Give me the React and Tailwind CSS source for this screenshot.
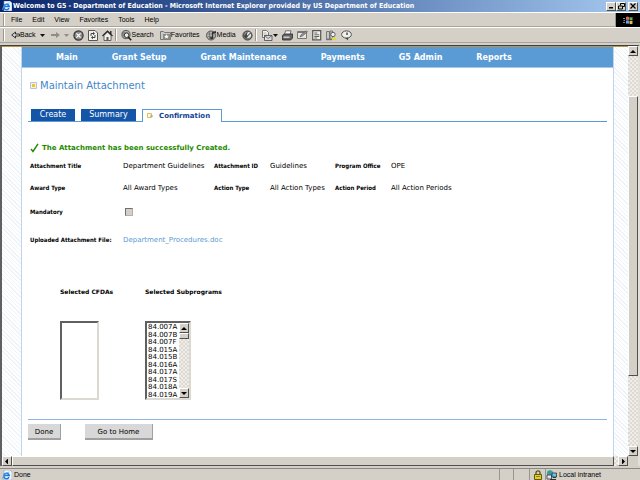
import React from "react";

const NAV_ITEMS = [
  "Main",
  "Grant Setup",
  "Grant Maintenance",
  "Payments",
  "G5 Admin",
  "Reports",
];

const MENU_ITEMS = ["File", "Edit", "View", "Favorites", "Tools", "Help"];

const SUBPROGRAMS = [
  "84.007A",
  "84.007B",
  "84.007F",
  "84.015A",
  "84.015B",
  "84.016A",
  "84.017A",
  "84.017S",
  "84.018A",
  "84.019A",
];

const RAISED =
  "bg-[#d4d0c8] border border-t-white border-l-white border-b-[#505050] border-r-[#505050]";

const HATCH =
  "bg-[repeating-linear-gradient(45deg,#ffffff_0px,#ffffff_2px,#eef3f7_2px,#eef3f7_3px)]";

const TRACK =
  "bg-[repeating-conic-gradient(#dedad2_0_25%,#efede9_0_50%)] bg-[length:4px_4px]";

const IeIcon = () => (
  <svg width="10" height="10" viewBox="0 0 10 10" className="shrink-0">
    <path d="M2 0h6l2 2v8H2z" fill="#f4f8ff" stroke="#8b9bb5" strokeWidth="0.6" />
    <path
      d="M7 7.2A2.7 2.7 0 1 1 7.2 5.4H2.4"
      fill="none"
      stroke="#1c78d8"
      strokeWidth="1.5"
    />
    <path d="M0.6 9C0 7 3.5 2.6 7.6 2" fill="none" stroke="#4fa8ee" strokeWidth="0.8" />
  </svg>
);

const ArrowIcon = ({ forward }) => (
  <svg width="9" height="8" viewBox="0 0 9 8" className="shrink-0">
    {forward ? (
      <path d="M0 3h5V1l4 3-4 3V5H0z" fill="#8f8d88" />
    ) : (
      <path d="M8.5 3H4.5V1L0.7 4l3.8 3V5h4z" fill="#d4d0c8" stroke="#222" strokeWidth="0.9" />
    )}
  </svg>
);

const Caret = ({ faded }) => (
  <svg width="5" height="3" viewBox="0 0 5 3" className="shrink-0">
    <path d="M0 0h5L2.5 3z" fill={faded ? "#8f8d88" : "#111"} />
  </svg>
);

const StopIcon = () => (
  <svg width="11" height="11" viewBox="0 0 11 11">
    <circle cx="5.5" cy="5.5" r="4.6" fill="#8c8c8c" stroke="#333" strokeWidth="1.2" />
    <path d="M3.4 3.4l4.2 4.2M7.6 3.4L3.4 7.6" stroke="#fff" strokeWidth="1.3" />
  </svg>
);

const RefreshIcon = () => (
  <svg width="10" height="11" viewBox="0 0 10 11">
    <path d="M0.5 0.5H7L9.5 3v7.5h-9z" fill="#f2f2ee" stroke="#555" />
    <path d="M3 6V3.5h3M7 5v2.5H4" fill="none" stroke="#444" />
    <path d="M5 1.8l2 1.7-2 1.7zM5 5.8L3 7.5l2 1.7z" fill="#444" />
  </svg>
);

const HomeIcon = () => (
  <svg width="11" height="11" viewBox="0 0 11 11">
    <path d="M8 1h1.5v3H8z" fill="#333" />
    <path d="M2 5.5L5.5 2 9 5.5v5H2z" fill="#f0efeb" stroke="#444" strokeWidth="0.8" />
    <path d="M0.5 6l5-5 5 5" fill="none" stroke="#222" strokeWidth="1.1" />
    <path d="M4.5 7h2v3.5h-2z" fill="#555" />
  </svg>
);

const SearchIcon = () => (
  <svg width="11" height="11" viewBox="0 0 11 11">
    <circle cx="5" cy="4.6" r="4.1" fill="#b5b5b2" stroke="#555" />
    <path d="M1.5 3h6M1 5h4M3 1.5v6" stroke="#666" strokeWidth="0.7" />
    <circle cx="5.6" cy="5.2" r="2.3" fill="#eee" stroke="#333" />
    <path d="M7.2 7l3 3.2" stroke="#222" strokeWidth="1.6" />
  </svg>
);

const FolderIcon = () => (
  <svg width="11" height="10" viewBox="0 0 11 10">
    <path d="M0.5 1.5h3l1 1h6v7h-10z" fill="#c9c9c5" stroke="#777" />
    <path d="M3 4h7.5v5.5H3z" fill="#8a8a88" />
    <path
      d="M6.5 4.3l.7 1.5 1.6.2-1.2 1 .4 1.6-1.5-.9-1.4.9.3-1.6-1.2-1 1.6-.2z"
      fill="#fff"
    />
  </svg>
);

const MediaIcon = () => (
  <svg width="11" height="11" viewBox="0 0 11 11">
    <circle cx="5" cy="5.5" r="4.5" fill="#b3b3b0" stroke="#555" />
    <path d="M1.5 4h5M1.5 6.5h4M3.5 1.5v8" stroke="#6a6a6a" strokeWidth="0.7" />
    <path d="M6 8V2l4-1v2L7.2 3.8V8z" fill="#333" />
    <ellipse cx="5.7" cy="8" rx="1.7" ry="1.3" fill="#333" />
  </svg>
);

const HistoryIcon = () => (
  <svg width="11" height="11" viewBox="0 0 11 11">
    <circle cx="5.5" cy="5.5" r="4.6" fill="#777" stroke="#444" />
    <circle cx="6" cy="5" r="3" fill="#ececea" />
    <path d="M4 8.5l-3-3h2c0-2 1-3 3-4-1 2-1 3-1 4h2z" fill="#444" />
    <path d="M6 5.5L8.5 3" stroke="#222" />
  </svg>
);

const MailIcon = () => (
  <svg width="12" height="11" viewBox="0 0 12 11">
    <path d="M1.5 0.5h4l2 2v5h-6z" fill="#f4f4f2" stroke="#666" strokeWidth="0.9" />
    <path d="M2.5 3h3M2.5 5h4" stroke="#999" strokeWidth="0.7" />
    <path d="M3.5 5.5H11v5H3.5z" fill="#ddd" stroke="#555" strokeWidth="0.9" />
    <path d="M3.5 5.5l3.7 3 3.8-3" fill="none" stroke="#555" strokeWidth="0.8" />
  </svg>
);

const PrintIcon = () => (
  <svg width="11" height="11" viewBox="0 0 11 11">
    <path d="M3.5 0.8H9L8 5H2.5z" fill="#f6f6f4" stroke="#555" strokeWidth="0.8" />
    <path d="M0.6 5.2l2-1.2h8v4l-2 2h-8z" fill="#666" stroke="#222" strokeWidth="0.8" />
    <path d="M1.5 6.5h6V8h-6z" fill="#ccc" />
  </svg>
);

const EditIcon = () => (
  <svg width="11" height="10" viewBox="0 0 11 10">
    <path d="M0.5 1.5h9v7h-9z" fill="#e6e6e2" stroke="#777" />
    <path d="M1 2.5h8" stroke="#777" />
    <path d="M3 7l1-2.2L9.5 0.8l1 1L5.5 6z" fill="#999" stroke="#555" strokeWidth="0.6" />
  </svg>
);

const NotesIcon = () => (
  <svg width="10" height="11" viewBox="0 0 10 11">
    <path d="M0.7 0.7h8v9.2h-8z" fill="#f1f1ee" stroke="#555" strokeWidth="1.2" />
    <path d="M2.3 3h3M2.3 4.8h5M2.3 6.5h5M2.3 8h3" stroke="#555" strokeWidth="0.9" />
  </svg>
);

const ResearchIcon = () => (
  <svg width="11" height="11" viewBox="0 0 11 11">
    <path d="M0.5 1.5h3V9h-3zM4 1h2.5v8H4z" fill="#c8c8c5" stroke="#666" strokeWidth="0.8" />
    <circle cx="7" cy="4.5" r="2.2" fill="#eee" stroke="#555" strokeWidth="0.9" />
    <path d="M6 10V7.5h3l1.5 2.5z" fill="#e3d832" />
    <path d="M0 9.7h6" stroke="#666" />
  </svg>
);

const MessengerIcon = () => (
  <svg width="11" height="11" viewBox="0 0 11 11">
    <ellipse cx="5.5" cy="4.5" rx="4.9" ry="3.6" fill="#f0f0ed" stroke="#444" strokeWidth="0.9" />
    <path d="M4.5 7.8h3l-1 2.7z" fill="#444" />
    <path d="M5 2.5h2V5H5z" fill="#777" />
  </svg>
);

const WindowsFlag = () => (
  <svg width="10" height="9" viewBox="0 0 10 9">
    <path d="M3 1q1.5-.8 3 0v3.1q-1.5-.8-3 0z" fill="#d8694f" />
    <path d="M6.5 1q1.5.8 3 0v3.1q-1.5.8-3 0z" fill="#6fae5b" />
    <path d="M3 4.7q1.5-.8 3 0v3.1q-1.5-.8-3 0z" fill="#6b9be0" />
    <path d="M6.5 4.7q1.5.8 3 0v3.1q-1.5.8-3 0z" fill="#e0c04c" />
    <path d="M0 2.5h2M0.5 4.5H2M0 6.5h2" stroke="#6d86b8" />
  </svg>
);

const LockIcon = () => (
  <svg width="8" height="10" viewBox="0 0 8 10">
    <path d="M2 5V2.8a2 2 0 0 1 4 0V5" fill="none" stroke="#55521c" strokeWidth="1.3" />
    <path d="M0.5 4.5h7v5h-7z" fill="#e2cf22" stroke="#5f5a10" />
    <path d="M2 6.5h4" stroke="#8f8512" />
  </svg>
);

const IntranetIcon = () => (
  <svg width="11" height="10" viewBox="0 0 11 10">
    <circle cx="4" cy="3.5" r="3.2" fill="#3d9be0" />
    <path d="M2 2l2-1.5 2 1-1 2-2 .5z" fill="#3aa655" />
    <path d="M1 5h4.500v4H1z" fill="#dfe8ee" stroke="#333" strokeWidth="0.8" />
    <path d="M6 3h4.500v4H6z" fill="#63c4ea" stroke="#333" strokeWidth="0.8" />
    <path d="M4 9.500h6M7 7.500h3" stroke="#333" />
  </svg>
);

const Separator = () => (
  <div className="h-3 w-0.5 shrink-0 border-l border-r border-l-[#9a968e] border-r-white" />
);

const ScrollButton = ({ direction, label }) => {
  const paths = {
    up: "M0 4h6L3 1z",
    down: "M0 1h6L3 4z",
    left: "M4 -0.5v6L1 2.5z",
    right: "M2 -0.5v6l3-3z",
  };
  return (
    <button
      type="button"
      aria-label={label}
      className={`flex size-2.5 shrink-0 items-center justify-center ${RAISED}`}
    >
      <svg width="6" height="5" viewBox="0 0 6 5">
        <path d={paths[direction]} fill="#000" />
      </svg>
    </button>
  );
};

const TitleBar = () => (
  <header className="flex h-3 items-center bg-linear-to-r from-[#0a246a] to-[#a6caf0] px-0.5">
    <IeIcon />
    <h1 className="grow truncate pl-px font-['DejaVu_Sans_Condensed','DejaVu_Sans',sans-serif] text-[7px] leading-3 font-bold text-white">
      Welcome to G5 - Department of Education - Microsoft Internet Explorer provided by US Department of Education
    </h1>
    <div className="flex shrink-0">
      <button type="button" aria-label="Minimize" className={`flex h-[9px] w-2.5 items-end justify-center ${RAISED}`}>
        <svg width="6" height="3" viewBox="0 0 6 3">
          <path d="M1 0h4v1.5H1z" />
        </svg>
      </button>
      <button type="button" aria-label="Restore" className={`flex h-[9px] w-2.5 items-center justify-center ${RAISED}`}>
        <svg width="7" height="7" viewBox="0 0 7 7">
          <path d="M2.5 2.5v-2h4v3h-2M0.5 3h4v3h-4z" fill="none" stroke="#000" />
        </svg>
      </button>
      <button type="button" aria-label="Close" className={`ml-0.5 flex h-[9px] w-2.5 items-center justify-center ${RAISED}`}>
        <svg width="6" height="6" viewBox="0 0 6 6">
          <path d="M0.5 0.5l5 5M5.5 0.5l-5 5" stroke="#000" strokeWidth="1.2" />
        </svg>
      </button>
    </div>
  </header>
);

const MenuBar = () => (
  <div className="flex h-[15px] items-stretch border-t border-white">
    <nav className="flex grow items-center gap-2.5 border-r border-b border-r-[#9a968e] border-b-[#a8a49c] pl-[3px]">
      <Separator />
      {MENU_ITEMS.map((item) => (
        <button key={item} type="button" className="first-of-type:-ml-1">
          {item}
        </button>
      ))}
    </nav>
    <div className="flex w-6 items-center justify-center bg-black">
      <WindowsFlag />
    </div>
  </div>
);

const ToolButton = ({ icon, label, name, className = "" }) => (
  <button type="button" aria-label={name} className={`flex items-center ${className}`}>
    {icon}
    {label}
  </button>
);

const Toolbar = () => (
  <div className="flex h-4 items-center border-t border-b border-t-white border-b-[#a8a49c] pl-[3px]">
    <Separator />
    <ToolButton className="ml-1.5" icon={<ArrowIcon />} label="Back" />
    <ToolButton className="ml-1" name="Back history" icon={<Caret />} />
    <ToolButton className="ml-1.5" name="Forward" icon={<ArrowIcon forward />} />
    <ToolButton className="ml-1" name="Forward history" icon={<Caret faded />} />
    <ToolButton className="ml-1" name="Stop" icon={<StopIcon />} />
    <ToolButton className="ml-1" name="Refresh" icon={<RefreshIcon />} />
    <ToolButton className="mr-0.5 ml-1" name="Home" icon={<HomeIcon />} />
    <Separator />
    <ToolButton className="ml-1" icon={<SearchIcon />} label="Search" />
    <ToolButton className="ml-1.5" icon={<FolderIcon />} label="Favorites" />
    <ToolButton className="ml-1.5" icon={<MediaIcon />} label="Media" />
    <ToolButton className="mr-0.5 ml-1.5" name="History" icon={<HistoryIcon />} />
    <Separator />
    <ToolButton
      className="ml-1"
      name="Mail"
      icon={
        <>
          <MailIcon />
          <Caret />
        </>
      }
    />
    <ToolButton className="ml-1" name="Print" icon={<PrintIcon />} />
    <ToolButton className="ml-1" name="Edit" icon={<EditIcon />} />
    <ToolButton className="ml-1" name="Discuss" icon={<NotesIcon />} />
    <ToolButton className="ml-1" name="Research" icon={<ResearchIcon />} />
    <ToolButton className="ml-1" name="Messenger" icon={<MessengerIcon />} />
  </div>
);

const Tabs = () => (
  <div className="mt-4 ml-1.5 flex h-[13px] items-end border-b border-[#5b9bd5]">
    <a href="#create" className="ml-[3px] flex h-3 w-11 items-center justify-center bg-[#1455a8] text-[8px] text-white">
      Create
    </a>
    <a href="#summary" className="ml-1.5 flex h-3 w-[55px] items-center justify-center bg-[#1455a8] text-[8px] text-white">
      Summary
    </a>
    <a
      href="#confirmation"
      className="-mb-px ml-1.5 flex h-[13px] w-20 items-center gap-1.5 border border-b-0 border-[#5b9bd5] bg-white pl-1 text-[7px] font-bold text-[#123f94]"
    >
      <svg width="6" height="6" viewBox="0 0 6 6">
        <path d="M0.5 0.5h4v4h-4z" fill="#fffbe6" stroke="#e3bd4b" />
        <path d="M3 3h3" stroke="#6ca0d6" />
      </svg>
      Confirmation
    </a>
  </div>
);

const Label = ({ children, ...props }) => (
  <label
    className="font-['DejaVu_Sans_Condensed','DejaVu_Sans',sans-serif] text-[6px] font-bold whitespace-nowrap"
    {...props}
  >
    {children}
  </label>
);

const Details = () => (
  <div className="grid grid-cols-[93px_91px_56px_65px_56px_1fr] grid-rows-[22px_22px_26px_30px] items-center text-[7px] whitespace-nowrap">
    <Label>Attachment Title</Label>
    <span>Department Guidelines</span>
    <Label>Attachment ID</Label>
    <span>Guidelines</span>
    <Label>Program Office</Label>
    <span>OPE</span>

    <Label>Award Type</Label>
    <span>All Award Types</span>
    <Label>Action Type</Label>
    <span>All Action Types</span>
    <Label>Action Period</Label>
    <span>All Action Periods</span>

    <Label htmlFor="mandatory">Mandatory</Label>
    <input
      id="mandatory"
      type="checkbox"
      disabled
      className="col-span-5 ml-0.5 size-2 appearance-none border border-t-[#707070] border-r-[#b5b1a9] border-b-[#b5b1a9] border-l-[#707070] bg-[#d4d0c8]"
    />

    <Label>Uploaded Attachment File:</Label>
    <a href="#file" className="col-span-5 text-[#5b9bd5]">
      Department_Procedures.doc
    </a>
  </div>
);

const SelectedLists = () => (
  <div className="mt-[33px] ml-[30px] flex">
    <div className="flex w-[85px] flex-col items-start gap-[25px]">
      <label htmlFor="cfdas" className="text-[6px] leading-2 font-bold">
        Selected CFDAs
      </label>
      <select
        id="cfdas"
        multiple
        className="h-[79px] w-[39px] appearance-none border-2 border-t-[#606060] border-r-[#dcd8d2] border-b-[#dcd8d2] border-l-[#606060] bg-white"
      />
    </div>
    <div className="flex flex-col items-start gap-[25px]">
      <label htmlFor="subprograms" className="text-[6px] leading-2 font-bold">
        Selected Subprograms
      </label>
      <div className="flex h-[79px] w-[46px] border-2 border-t-[#606060] border-r-[#dcd8d2] border-b-[#dcd8d2] border-l-[#606060] bg-white">
        <select
          id="subprograms"
          multiple
          className="h-full w-8 appearance-none overflow-hidden bg-white text-[7px] [scrollbar-width:none]"
        >
          {SUBPROGRAMS.map((code) => (
            <option key={code} className="min-h-0 p-0 pl-px leading-[7px] odd:h-2 even:h-[7px]">
              {code}
            </option>
          ))}
        </select>
        <div className={`flex w-2.5 flex-col ${TRACK}`}>
          <ScrollButton direction="up" label="Scroll list up" />
          <div className={`h-1.5 ${RAISED}`} />
          <div className="grow" />
          <ScrollButton direction="down" label="Scroll list down" />
        </div>
      </div>
    </div>
  </div>
);

const PageButton = ({ children, className }) => (
  <button
    type="button"
    className={`flex h-4 items-center justify-center border-r border-b-2 border-[#a0a0a0] bg-[#d8d8d8] pt-0.5 text-[7px] ${className}`}
  >
    {children}
  </button>
);

const Page = () => (
  <main className="grow border-x border-[#c3d5ea] bg-white pb-4">
    <nav className="flex h-[21px] items-center gap-[34px] border-b border-[#a9c8e8] bg-[#5b9bd5] pt-0.5 pl-[34px] text-[8px] font-bold whitespace-nowrap text-white">
      {NAV_ITEMS.map((item) => (
        <a key={item} href="#nav">
          {item}
        </a>
      ))}
    </nav>

    <h2 className="mt-2.5 flex items-center gap-[3px] pl-2 text-[10px] leading-[15px] text-[#3f86cb]">
      <svg width="7" height="7" viewBox="0 0 7 7">
        <path d="M0.5 0.5h6v6h-6z" fill="#fdf3c8" stroke="#a9c8e8" />
        <path d="M2 2h3v3H2z" fill="#eec23c" />
      </svg>
      Maintain Attachment
    </h2>

    <div className="pr-1.5">
      <Tabs />

      <div className="pl-2">
        <p className="mt-[19px] flex h-3.5 items-center gap-[3px] text-[7px] font-bold text-[#1f8a00]">
          <svg width="9" height="10" viewBox="0 0 9 10">
            <path d="M1 6l2 2.5L8 0.8" fill="none" stroke="#1f8a00" strokeWidth="1.4" />
          </svg>
          The Attachment has been successfully Created.
        </p>
        <Details />
        <SelectedLists />
      </div>

      <div className="mt-[19px] ml-1.5 flex gap-6 border-t border-[#8fb6e0] pt-1">
        <PageButton className="w-[33px]">Done</PageButton>
        <PageButton className="w-[68px]">Go to Home</PageButton>
      </div>
    </div>
  </main>
);

const StatusBar = () => (
  <footer className="flex h-3 items-stretch border-t border-[#8d8982]">
    <div className="flex grow items-center gap-0.5 pl-0.5">
      <IeIcon />
      Done
    </div>
    <div className="w-3.5 border-l border-[#9a968e]" />
    <div className="w-4 border-l border-[#9a968e]" />
    <div className="flex w-4 items-center justify-center border-l border-[#9a968e]">
      <LockIcon />
    </div>
    <div className="flex w-[95px] items-center gap-0.5 border-l border-[#9a968e]">
      <IntranetIcon />
      Local intranet
    </div>
  </footer>
);

const App = () => {
  return (
    <div className="flex min-h-screen flex-col bg-[#d4d0c8] font-['Liberation_Sans',sans-serif] text-[7px] leading-2.5 text-black">
      <TitleBar />
      <MenuBar />
      <Toolbar />
      <div className="mt-0.5 flex grow flex-col border-x-2 border-t border-l-[#606060] border-r-[#e4e0d8] border-t-[#404040]">
        <div className="flex grow">
          <div className={`flex grow border-t border-[#b8954a] pr-3.5 pl-[19px] font-['DejaVu_Sans',sans-serif] ${HATCH}`}>
            <Page />
          </div>
          <div className={`flex w-2.5 flex-col ${TRACK}`}>
            <ScrollButton direction="up" label="Scroll up" />
            <div className="h-10" />
            <div className={`h-[280px] ${RAISED}`} />
            <div className="grow" />
            <ScrollButton direction="down" label="Scroll down" />
          </div>
        </div>
        <div className={`flex h-2.5 ${TRACK}`}>
          <ScrollButton direction="left" label="Scroll left" />
          <div className={`grow ${RAISED}`} />
          <div className="w-1" />
          <ScrollButton direction="right" label="Scroll right" />
          <div className="w-2.5 bg-[#d4d0c8]" />
        </div>
      </div>
      <div className="h-0.5" />
      <StatusBar />
    </div>
  );
};

export default App;
